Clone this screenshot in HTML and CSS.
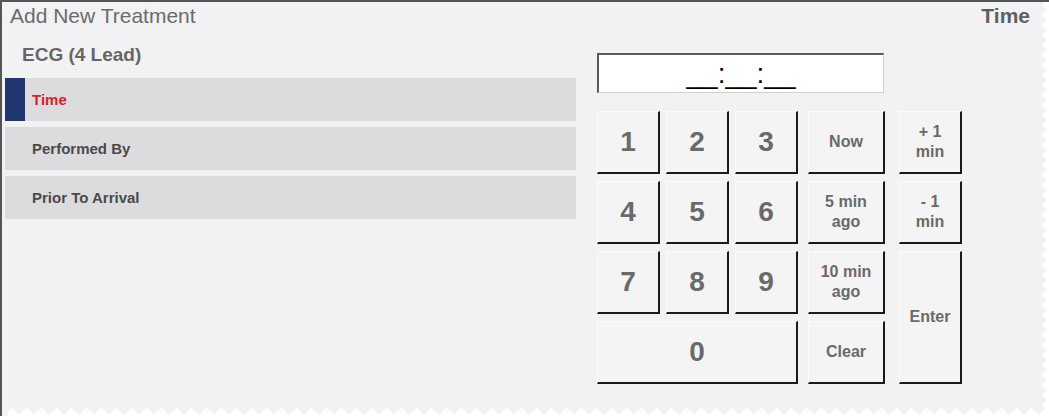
FILE: index.html
```html
<!DOCTYPE html>
<html lang="en">
  <head>
    <meta charset="UTF-8" />
    <title>Add New Treatment</title>
    <link rel="stylesheet" href="styles.css">
  </head>
  <body>
    <div class="screen">
      <div class="topbar">
        <span class="title">Add New Treatment</span>
        <span class="section">Time</span>
      </div>
      <div class="main">
        <div class="fields">
          <div class="group">ECG (4 Lead)</div>
          <div class="field active"><span class="mark"></span><span class="label">Time</span></div>
          <div class="field"><span class="label">Performed By</span></div>
          <div class="field"><span class="label">Prior To Arrival</span></div>
        </div>
        <div class="pad">
          <div class="timebox">__:__:__</div>
          <div class="keys">
            <button class="key num">1</button>
            <button class="key num">2</button>
            <button class="key num">3</button>
            <button class="key txt c4">Now</button>
            <button class="key txt c5">+ 1<br>min</button>
            <button class="key num">4</button>
            <button class="key num">5</button>
            <button class="key num">6</button>
            <button class="key txt c4">5 min<br>ago</button>
            <button class="key txt c5">- 1<br>min</button>
            <button class="key num">7</button>
            <button class="key num">8</button>
            <button class="key num">9</button>
            <button class="key txt c4">10 min<br>ago</button>
            <button class="key txt c5 enter">Enter</button>
            <button class="key num zero">0</button>
            <button class="key txt c4">Clear</button>
          </div>
        </div>
      </div>
      <svg class="tear" width="1049" height="416" viewBox="0 0 1049 416">
        <defs>
          <pattern id="tear-right" x="1041" y="0" width="6" height="10" patternUnits="userSpaceOnUse">
            <polygon points="6,0 0.5,5 6,10" fill="#fff" />
          </pattern>
          <pattern id="tear-bottom" x="4" y="406" width="15" height="9" patternUnits="userSpaceOnUse">
            <polygon points="0,9 7.5,1.5 15,9" fill="#fff" />
          </pattern>
        </defs>
        <rect x="1041" y="0" width="6" height="416" fill="url(#tear-right)" />
        <rect x="1046" y="0" width="3" height="416" fill="#fff" />
        <rect x="8" y="406" width="1041" height="9" fill="url(#tear-bottom)" />
        <rect x="8" y="415" width="1041" height="1" fill="#fff" />
      </svg>
    </div>
  </body>
</html>
```

FILE: styles.css
```css
body {
  margin: 0;
  font-family: "Liberation Sans", Arial, Helvetica, sans-serif;
  background: #fff;
}
.screen {
  position: relative;
  width: 1049px;
  height: 416px;
  box-sizing: border-box;
  border-top: 2px solid #555;
  border-left: 2px solid #555;
  background: #f2f2f4;
  overflow: hidden;
}
.topbar {
  display: flex;
  justify-content: space-between;
  align-items: baseline;
  padding: 2px 19px 0 8px;
  height: 24px;
}
.title {
  font-size: 21px;
  color: #6b6b6b;
}
.section {
  font-size: 21px;
  font-weight: bold;
  color: #5f5f5f;
}
.main {
  display: flex;
  gap: 21px;
  padding-left: 3px;
}
.fields {
  width: 571px;
  padding-top: 16px;
}
.group {
  font-size: 19px;
  font-weight: bold;
  color: #666;
  padding-left: 17px;
  line-height: 22px;
  margin-bottom: 12px;
}
.field {
  display: flex;
  align-items: center;
  height: 43px;
  margin-bottom: 6px;
  background: #dcdcde;
}
.mark {
  width: 20px;
  align-self: stretch;
  background: #23366f;
}
.label {
  font-size: 15px;
  font-weight: bold;
  color: #4a4a4a;
  padding-left: 27px;
}
.active .label {
  color: #d71f2c;
  padding-left: 7px;
}
.pad {
  padding-top: 25px;
}
.timebox {
  box-sizing: border-box;
  width: 287px;
  height: 40px;
  background: #fff;
  border-top: 2px solid #5a5a5a;
  border-left: 2px solid #5a5a5a;
  border-right: 1px solid #d4d0c8;
  border-bottom: 1px solid #d4d0c8;
  text-align: center;
  font-size: 28px;
  line-height: 33px;
  padding-top: 2px;
  color: #000;
}
.keys {
  display: grid;
  grid-template-columns: 63px 63px 63px 81px 71px;
  grid-auto-rows: 63px;
  column-gap: 6px;
  row-gap: 7px;
  margin-top: 18px;
}
.key {
  box-sizing: border-box;
  margin: 0;
  padding: 0;
  font-family: inherit;
  font-weight: bold;
  background: #f4f4f4;
  border-top: 1px solid #fbfbfb;
  border-left: 1px solid #fbfbfb;
  border-right: 2px solid #1a1a1a;
  border-bottom: 2px solid #1a1a1a;
  color: #6a6a6a;
}
.num {
  font-size: 28px;
}
.txt {
  font-size: 16px;
  line-height: 20px;
}
.c4 {
  margin-left: 4px;
}
.c5 {
  margin-left: 8px;
}
.enter {
  grid-row: span 2;
}
.zero {
  grid-column: span 3;
}
.tear {
  position: absolute;
  left: -2px;
  top: -2px;
}
```
